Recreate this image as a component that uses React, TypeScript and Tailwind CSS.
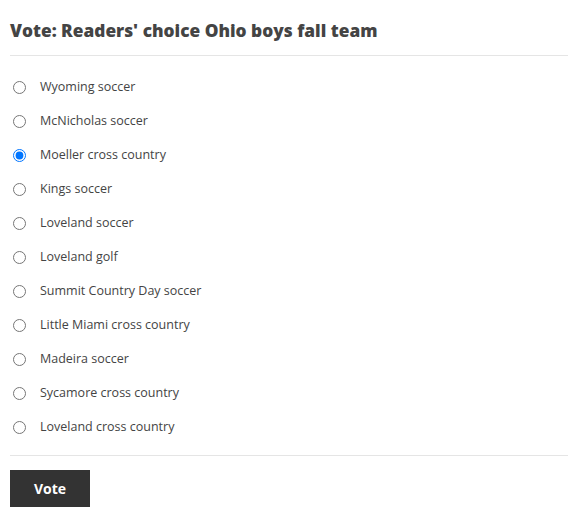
const options = [
  "Wyoming soccer",
  "McNicholas soccer",
  "Moeller cross country",
  "Kings soccer",
  "Loveland soccer",
  "Loveland golf",
  "Summit Country Day soccer",
  "Little Miami cross country",
  "Madeira soccer",
  "Sycamore cross country",
  "Loveland cross country",
];

export default function App() {
  return (
    <div className="bg-white px-[10px] pr-[1px] font-['Open_Sans',sans-serif] text-[#444]">
      <h2 className="pt-[19px] pb-[12px] text-[17.3px] leading-[24px] font-extrabold text-[#444] border-b border-[#e5e5e5]">
        Vote: Readers' choice Ohio boys fall team
      </h2>
      <form className="pt-[14px]">
        {options.map((opt) => (
          <label key={opt} className="flex items-center h-[34px] cursor-pointer">
            <input
              type="radio"
              name="team"
              defaultChecked={opt === "Moeller cross country"}
              className="m-0 ml-[3px] w-[13px] h-[13px]"
            />
            <span className="ml-[14px] text-[12.5px]">{opt}</span>
          </label>
        ))}
        <div className="mt-[11px] border-t border-[#e5e5e5]" />
        <button
          type="button"
          className="mt-[14px] w-[80px] h-[37px] bg-[#333] text-white text-[14px] font-bold"
        >
          Vote
        </button>
      </form>
    </div>
  );
}
